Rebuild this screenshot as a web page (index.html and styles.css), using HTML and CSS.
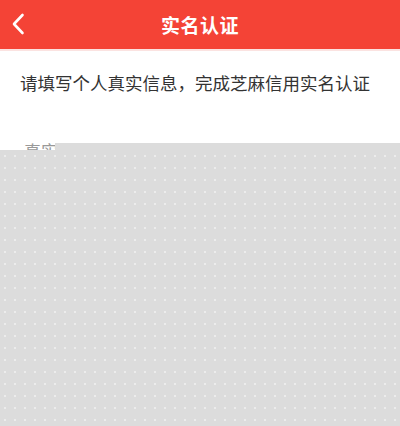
FILE: index.html
```html
<!DOCTYPE html>
<html>
<head>
<meta charset="utf-8">
<link rel="stylesheet" href="styles.css">
</head>
<body>
<div class="page">
  <header class="bar">
    <span class="back">
      <svg width="14" height="22" viewBox="0 0 14 22"><path d="M11.5 2 L3 11 L11.5 20" fill="none" stroke="#fff" stroke-width="2.6" stroke-linecap="round" stroke-linejoin="round"/></svg>
    </span>
    <h1 class="title">实名认证</h1>
  </header>
  <main class="content">
    <p class="intro">请填写个人真实信息，完成芝麻信用实名认证</p>
    <div class="field">真实姓名</div>
  </main>
  <div class="overlay"></div>
</div>
</body>
</html>
```
FILE: styles.css
```css
html, body {
  margin: 0;
  padding: 0;
  background: #fff;
  font-family: "Noto Sans CJK SC", "Noto Sans", sans-serif;
}
.page {
  position: relative;
  width: 400px;
  height: 426px;
  overflow: hidden;
}
.bar {
  height: 49px;
  background: #f44336;
  border-bottom: 2px solid #fbe3e1;
  display: flex;
  align-items: center;
  justify-content: center;
  position: relative;
}
.back {
  position: absolute;
  left: 11px;
  top: 13px;
  display: flex;
}
.title {
  margin: 0;
  color: #fff;
  font-size: 19px;
  font-weight: 700;
  letter-spacing: 0.5px;
}
.content {
  padding: 0 20px;
}
.intro {
  margin: 19px 0 0;
  font-size: 17.5px;
  line-height: 26px;
  color: #333;
}
.field {
  margin-top: 42px;
  padding-left: 4px;
  font-size: 17px;
  color: #999;
}
.overlay {
  position: absolute;
  left: 0;
  right: 0;
  top: 150px;
  bottom: 0;
  background-color: #dcdcdc;
  background-image: radial-gradient(circle, #ececec 1px, transparent 1.2px);
  background-size: 10px 12px;
}
.overlay::before {
  content: "";
  position: absolute;
  left: 55px;
  right: 0;
  top: -7px;
  height: 7px;
  background: #dcdcdc;
}
```
